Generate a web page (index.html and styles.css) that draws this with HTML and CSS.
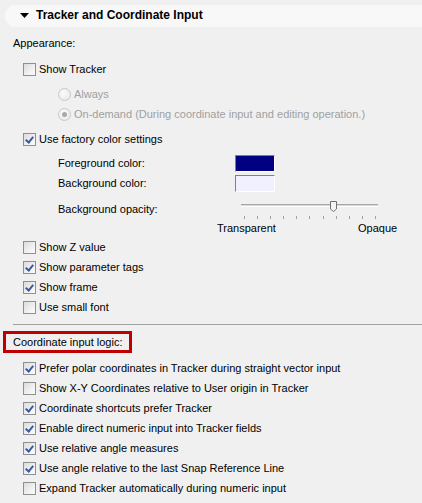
FILE: index.html
```html
<!DOCTYPE html>
<html>
<head>
<meta charset="utf-8">
<link rel="stylesheet" href="styles.css">
</head>
<body>
<div class="header">
  <svg class="tri" width="9" height="5" viewBox="0 0 9 5"><polygon points="0,0 9,0 4.5,5" fill="#000"/></svg>
  <span class="title">Tracker and Coordinate Input</span>
</div>

<div class="group-label first">Appearance:</div>

<div class="row cb gap6"><span class="box"></span><span>Show Tracker</span></div>
<div class="row rb gap5"><span class="radio"></span><span class="dis">Always</span></div>
<div class="row rb"><span class="radio on"></span><span class="dis">On-demand (During coordinate input and editing operation.)</span></div>
<div class="row cb gap5"><span class="box checked"></span><span>Use factory color settings</span></div>

<div class="row sub gap4"><span class="lbl">Foreground color:</span><span class="swatch fg"></span></div>
<div class="row sub"><span class="lbl">Background color:</span><span class="swatch bg"></span></div>
<div class="row sub gap6">
  <span class="lbl">Background opacity:</span>
  <div class="slider">
    <div class="track"></div>
    <svg class="thumb" width="7" height="11" viewBox="0 0 7 11"><path d="M0.5,0.5 H6.5 V8 L3.5,10.5 L0.5,8 Z" fill="#f4f4f4" stroke="#707070"/></svg>
    <div class="ticks"><i></i><i></i><i></i><i></i><i></i><i></i><i></i><i></i><i></i><i></i><i></i></div>
  </div>
</div>
<div class="scale"><span class="lo">Transparent</span><span>Opaque</span></div>

<div class="row cb gap1"><span class="box"></span><span>Show Z value</span></div>
<div class="row cb"><span class="box checked"></span><span>Show parameter tags</span></div>
<div class="row cb"><span class="box checked"></span><span>Show frame</span></div>
<div class="row cb"><span class="box"></span><span>Use small font</span></div>

<div class="sep"></div>

<div class="group-label boxed">Coordinate input logic:</div>

<div class="row cb gap5"><span class="box checked"></span><span>Prefer polar coordinates in Tracker during straight vector input</span></div>
<div class="row cb"><span class="box"></span><span>Show X-Y Coordinates relative to User origin in Tracker</span></div>
<div class="row cb"><span class="box checked"></span><span>Coordinate shortcuts prefer Tracker</span></div>
<div class="row cb"><span class="box checked"></span><span>Enable direct numeric input into Tracker fields</span></div>
<div class="row cb"><span class="box checked"></span><span>Use relative angle measures</span></div>
<div class="row cb"><span class="box checked"></span><span>Use angle relative to the last Snap Reference Line</span></div>
<div class="row cb"><span class="box"></span><span>Expand Tracker automatically during numeric input</span></div>
</body>
</html>
```

FILE: styles.css
```css
html, body {
  margin: 0;
  padding: 0;
  background: #f0f0f0;
  font-family: "Liberation Sans", Arial, sans-serif;
  font-size: 11px;
  color: #000;
  overflow: hidden;
}

.header {
  margin: 5px 0 0 5px;
  height: 22px;
  border-radius: 11px 0 0 11px;
  background: #f8f8f8;
  display: flex;
  align-items: center;
  padding-left: 15px;
}
.tri { margin-right: 7px; margin-top: -2px; }
.title { font-weight: bold; font-size: 12px; margin-top: -2px; }

.group-label {
  height: 20px;
  line-height: 20px;
  padding-left: 13px;
}
.group-label.first { margin-top: 6px; }
.group-label.boxed {
  margin: 6px 0 0 3px;
  width: 116px;
  height: 16px;
  line-height: 16px;
  padding-left: 7px;
  border: 3px solid #c00000;
}

.row {
  height: 20px;
  display: flex;
  align-items: center;
  white-space: nowrap;
}
.gap1 { margin-top: 1px; }
.gap4 { margin-top: 4px; }
.gap5 { margin-top: 5px; }
.gap6 { margin-top: 6px; }

.cb { padding-left: 23px; }
.rb { padding-left: 58px; }
.sub { padding-left: 58px; }

.box {
  width: 11px;
  height: 11px;
  border: 1px solid #8e8f8f;
  background: linear-gradient(135deg, #dcdcdc 0%, #f4f4f4 70%, #fbfbfb 100%);
  margin-right: 3px;
  position: relative;
  flex: none;
}
.box.checked::after {
  content: "";
  position: absolute;
  left: 3px;
  top: 1px;
  width: 3px;
  height: 6px;
  border: solid #3c5aa0;
  border-width: 0 2px 2px 0;
  transform: rotate(40deg);
}

.radio {
  width: 11px;
  height: 11px;
  border: 1px solid #c8c8c8;
  border-radius: 50%;
  background: radial-gradient(circle at 40% 40%, #fafafa, #e6e6e6);
  margin-right: 3px;
  flex: none;
  position: relative;
}
.radio.on::after {
  content: "";
  position: absolute;
  left: 3px;
  top: 3px;
  width: 5px;
  height: 5px;
  border-radius: 50%;
  background: #a8a8a8;
}
.dis { color: #a0a0a0; }

.lbl { width: 177px; flex: none; }
.swatch {
  width: 38px;
  height: 15px;
  border: 1px solid;
  border-color: #808080 #ffffff #ffffff #808080;
  flex: none;
}
.swatch.fg { background: #000080; }
.swatch.bg { background: #f0f0ff; }

.slider {
  position: relative;
  width: 140px;
  height: 20px;
  margin-left: 6px;
  align-self: flex-start;
}
.track {
  position: absolute;
  left: 0;
  top: 5px;
  width: 137px;
  height: 1px;
  border-top: 1px solid #a8a8a8;
  border-bottom: 1px solid #ffffff;
  background: #d8d8d8;
}
.thumb { position: absolute; left: 89px; top: 2px; }
.ticks {
  position: absolute;
  left: 3px;
  top: 17px;
  width: 132px;
  display: flex;
  justify-content: space-between;
}
.ticks i {
  display: block;
  width: 1px;
  height: 3px;
  background: #a0a0a0;
}

.scale {
  height: 17px;
  display: flex;
  align-items: center;
  padding-left: 217px;
  white-space: nowrap;
}
.scale .lo { width: 141px; flex: none; }

.sep {
  margin: 7px 0 0 13px;
  height: 1px;
  background: #a0a0a0;
}
```
